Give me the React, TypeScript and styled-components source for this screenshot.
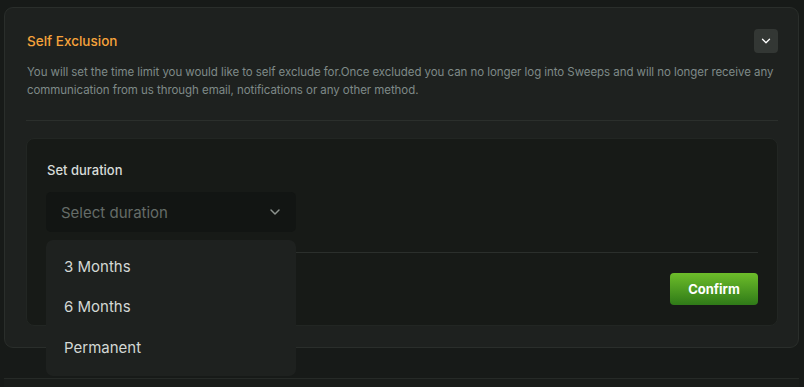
import styled, { createGlobalStyle } from "styled-components";

const GlobalStyle = createGlobalStyle`
  body {
    margin: 0;
    background: #171a18;
    font-family: Inter, "Noto Sans", sans-serif;
  }
`;

const Page = styled.div`
  padding: 7px 5px 0 4px;
  height: 387px;
  box-sizing: border-box;
  overflow: hidden;
`;

const Card = styled.section`
  background: #1e211f;
  border: 1px solid #2a2e2b;
  border-radius: 9px;
  padding: 21px 20px 21px 21px;
`;

const Header = styled.div`
  display: flex;
  align-items: center;
  justify-content: space-between;
  padding-left: 1px;
`;

const Title = styled.h2`
  margin: 0;
  font-size: 13.5px;
  font-weight: 500;
  color: #f6a33b;
`;

const IconButton = styled.button`
  width: 24px;
  height: 24px;
  border: none;
  border-radius: 4px;
  background: #333734;
  color: #ffffff;
  display: flex;
  align-items: center;
  justify-content: center;
  padding: 0;
`;

const Description = styled.p`
  margin: 10px 0 0 1px;
  font-size: 11.5px;
  letter-spacing: -0.06px;
  line-height: 18px;
  color: #7f8a88;
`;

const Divider = styled.hr`
  border: none;
  border-top: 1px solid #2b2f2c;
  margin: ${(p: { $top: number; $bottom: number }) => `${p.$top}px 0 ${p.$bottom}px`};
`;

const Inner = styled.div`
  background: #171a17;
  border: 1px solid #222623;
  border-radius: 8px;
  padding: 23px 19px 20px 19px;
`;

const Label = styled.div`
  font-size: 13px;
  font-weight: 500;
  line-height: 16px;
  color: #d7dcd9;
  padding-left: 1px;
`;

const SelectWrap = styled.div`
  position: relative;
  width: 250px;
  margin-top: 14px;
`;

const SelectBox = styled.div`
  height: 40px;
  border-radius: 5px;
  background: #121513;
  display: flex;
  align-items: center;
  justify-content: space-between;
  padding: 0 13px 0 15px;
  font-size: 15px;
  color: #656c68;
`;

const Menu = styled.ul`
  position: absolute;
  top: 48px;
  left: 0;
  width: 250px;
  margin: 0;
  padding: 6px 0 8px;
  list-style: none;
  background: #1e211f;
  border-radius: 7px;
  z-index: 2;
`;

const MenuItem = styled.li`
  height: 40.5px;
  display: flex;
  align-items: center;
  padding-left: 18px;
  font-size: 15px;
  color: #d3d8d5;
`;

const Footer = styled.div`
  display: flex;
  justify-content: flex-end;
`;

const ConfirmButton = styled.button`
  width: 88px;
  height: 32px;
  border: none;
  border-radius: 4px;
  background: linear-gradient(180deg, #6dbd2a 0%, #2f7a18 100%);
  color: #ffffff;
  font-family: inherit;
  font-size: 13px;
  font-weight: 700;
`;

const NextSection = styled.div`
  margin-top: 30px;
  border-top: 1px solid #262a27;
  height: 20px;
  background: #191c1a;
`;

const Chevron = ({ size, color }: { size: number; color: string }) => (
  <svg width={size} height={size} viewBox="0 0 24 24" fill="none" stroke={color} strokeWidth={2.2} strokeLinecap="round" strokeLinejoin="round">
    <path d="M6 9l6 6 6-6" />
  </svg>
);

const options = ["3 Months", "6 Months", "Permanent"];

export default function App() {
  return (
    <>
      <GlobalStyle />
      <Page>
        <Card>
          <Header>
            <Title>Self Exclusion</Title>
            <IconButton aria-label="Collapse">
              <Chevron size={14} color="#ffffff" />
            </IconButton>
          </Header>
          <Description>
            You will set the time limit you would like to self exclude for.Once excluded you can no longer log into
            Sweeps and will no longer receive any communication from us through email, notifications or any other
            method.
          </Description>
          <Divider $top={21} $bottom={17} />
          <Inner>
            <Label>Set duration</Label>
            <SelectWrap>
              <SelectBox>
                <span>Select duration</span>
                <Chevron size={16} color="#8d938f" />
              </SelectBox>
              <Menu>
                {options.map((o) => (
                  <MenuItem key={o}>{o}</MenuItem>
                ))}
              </Menu>
            </SelectWrap>
            <Divider $top={20} $bottom={20} />
            <Footer>
              <ConfirmButton>Confirm</ConfirmButton>
            </Footer>
          </Inner>
        </Card>
        <NextSection />
      </Page>
    </>
  );
}
